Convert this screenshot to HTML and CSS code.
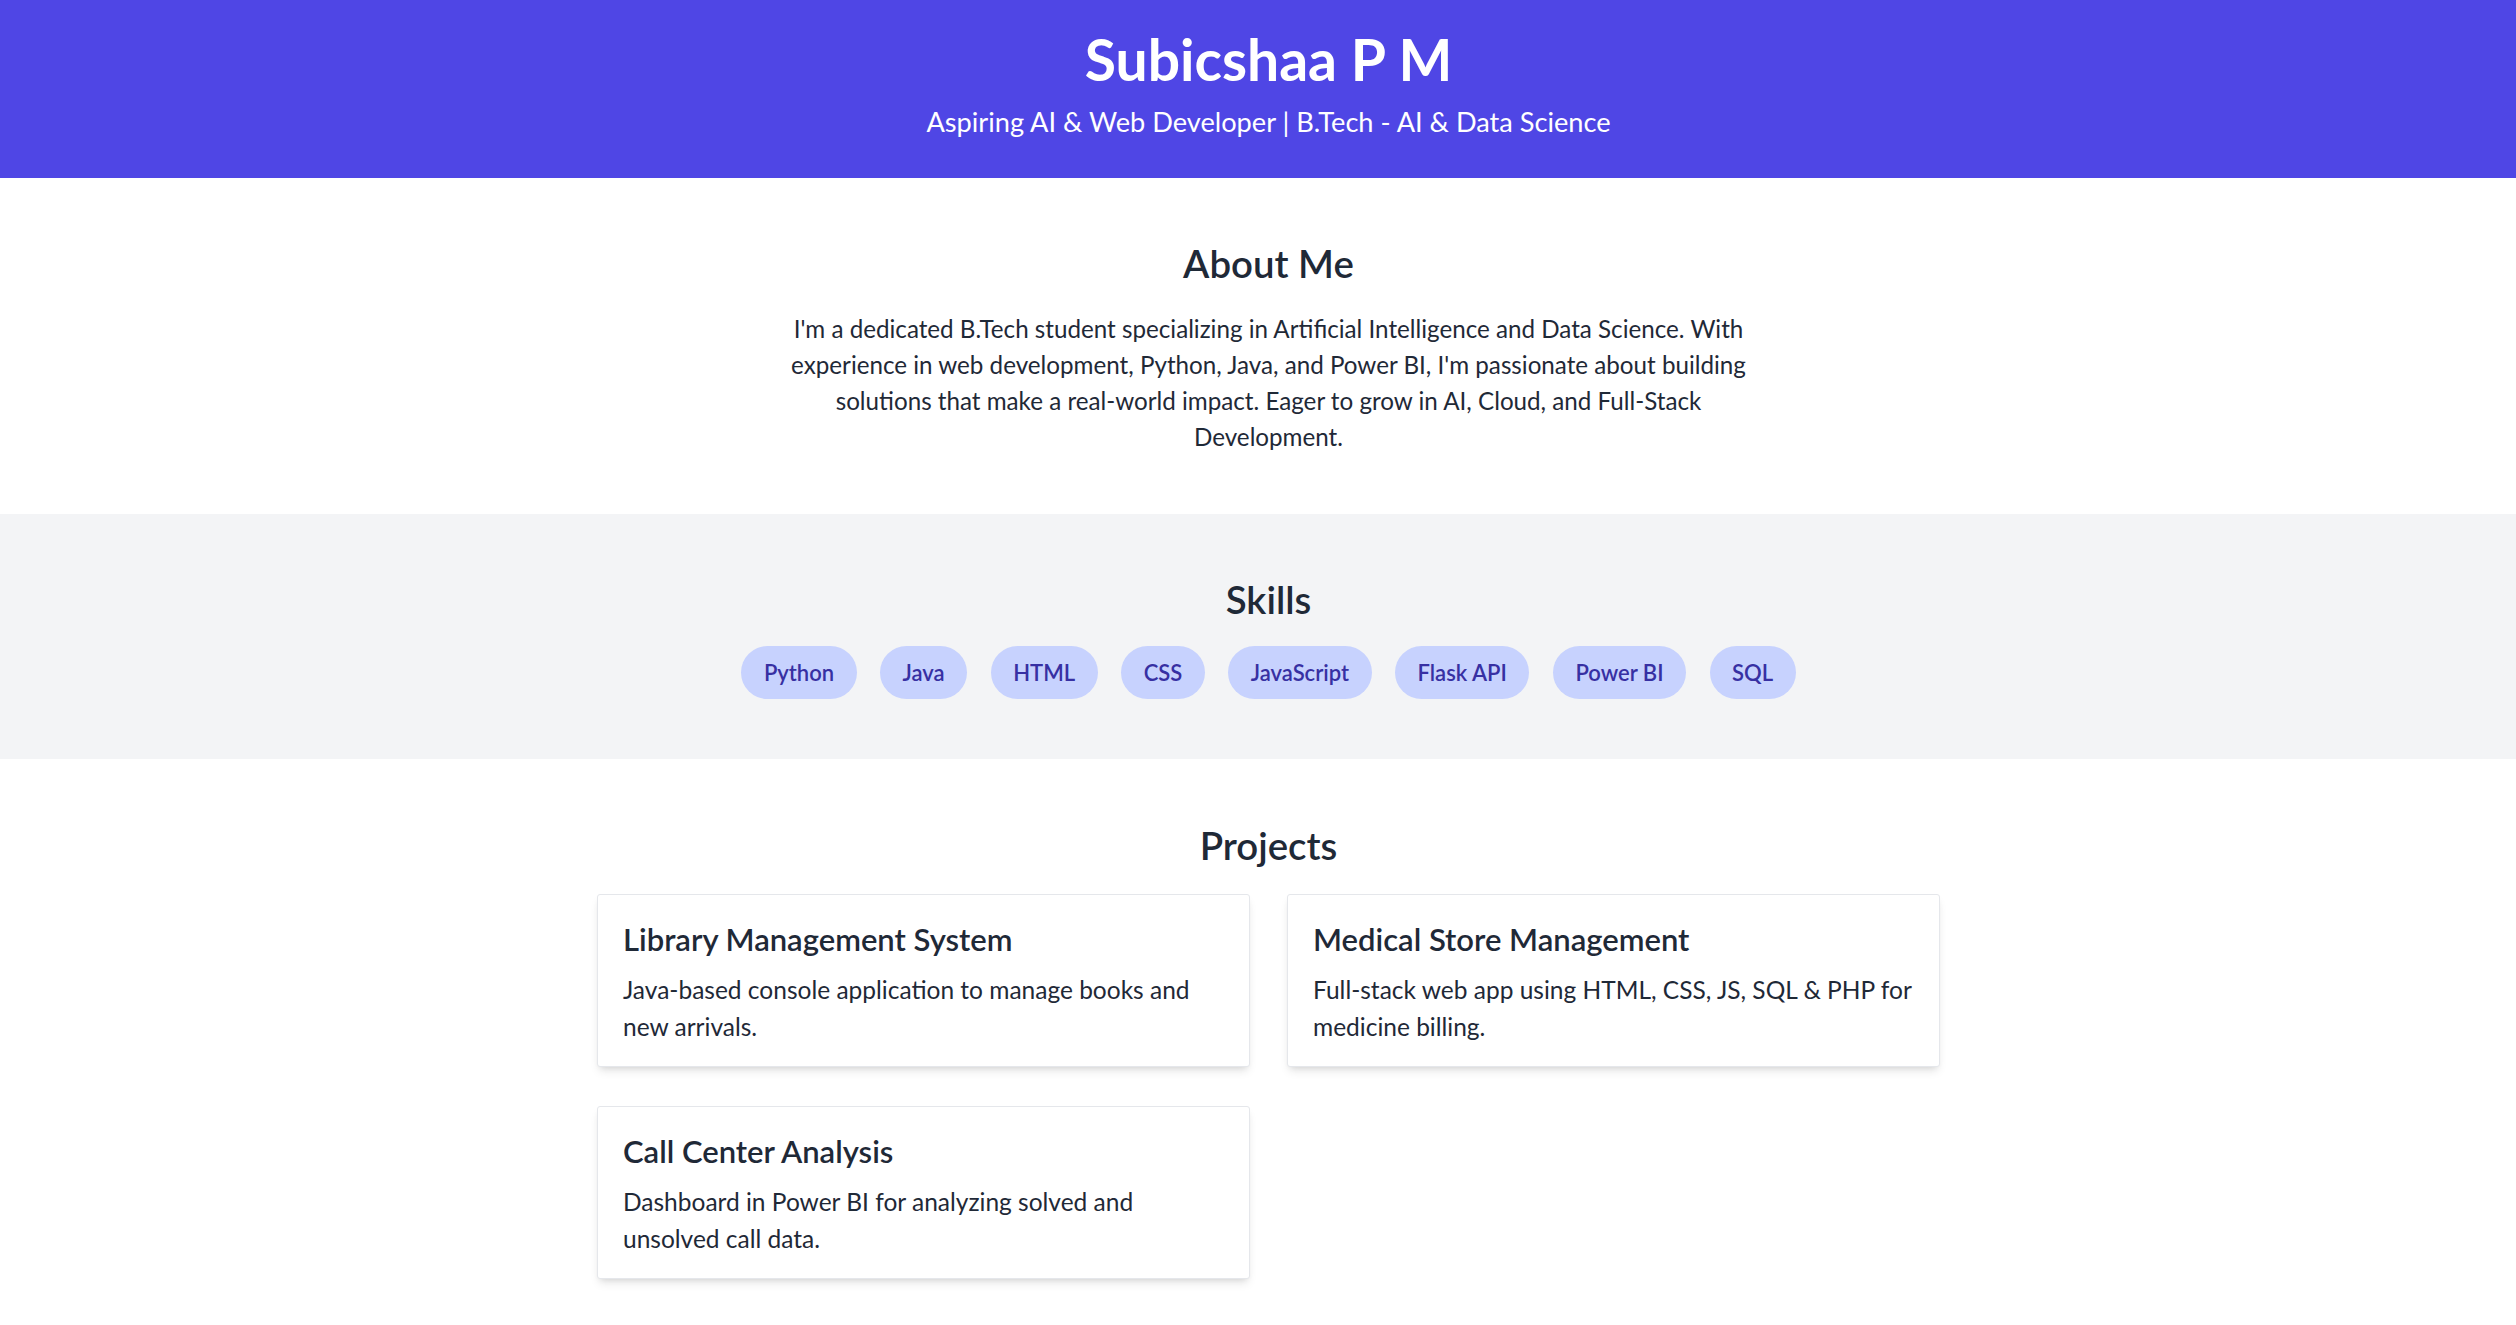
FILE: index.html
```html
<!DOCTYPE html>
<html lang="en">
<head>
<meta charset="utf-8">
<title>Subicshaa P M</title>
<link rel="stylesheet" href="styles.css">
</head>
<body>
  <header class="hero">
    <h1 class="hero-title">Subicshaa P M</h1>
    <p class="hero-sub">Aspiring AI &amp; Web Developer | B.Tech - AI &amp; Data Science</p>
  </header>

  <section class="section about">
    <h2 class="section-title">About Me</h2>
    <p class="about-text">I'm a dedicated B.Tech student specializing in Artificial Intelligence and Data Science. With experience in web development, Python, Java, and Power BI, I'm passionate about building solutions that make a real-world impact. Eager to grow in AI, Cloud, and Full-Stack Development.</p>
  </section>

  <section class="section skills">
    <h2 class="section-title skills-title">Skills</h2>
    <ul class="pill-list">
      <li class="pill">Python</li>
      <li class="pill">Java</li>
      <li class="pill">HTML</li>
      <li class="pill">CSS</li>
      <li class="pill">JavaScript</li>
      <li class="pill">Flask API</li>
      <li class="pill">Power BI</li>
      <li class="pill">SQL</li>
    </ul>
  </section>

  <section class="section projects">
    <h2 class="section-title">Projects</h2>
    <div class="card-grid">
      <article class="card">
        <h3 class="card-title">Library Management System</h3>
        <p class="card-text">Java-based console application to manage books and new arrivals.</p>
      </article>
      <article class="card">
        <h3 class="card-title">Medical Store Management</h3>
        <p class="card-text">Full-stack web app using HTML, CSS, JS, SQL &amp; PHP for medicine billing.</p>
      </article>
      <article class="card">
        <h3 class="card-title">Call Center Analysis</h3>
        <p class="card-text">Dashboard in Power BI for analyzing solved and unsolved call data.</p>
      </article>
    </div>
  </section>
</body>
</html>
```

FILE: styles.css
```css
* {
  box-sizing: border-box;
}

html, body {
  margin: 0;
  padding: 0;
}

body {
  font-family: Lato, "Noto Sans", "Liberation Sans", sans-serif;
  color: #1f2937;
  background: #ffffff;
}

.hero {
  background: #4f46e5;
  color: #ffffff;
  text-align: center;
  height: 178px;
  padding: 27px 0 0 21px;
}

.hero-title {
  margin: 0;
  font-size: 57px;
  line-height: 64px;
  font-weight: 700;
}

.hero-sub {
  margin: 10.5px 0 0;
  font-size: 27.2px;
  line-height: 40px;
  font-weight: 400;
}

.section {
  text-align: center;
  padding-left: 21px;
}

.about {
  height: 336px;
  padding-top: 59.5px;
}

.skills {
  background: #f3f4f6;
  height: 245px;
  padding-top: 59.5px;
}

.projects {
  padding-top: 60.5px;
  padding-bottom: 60px;
}

.section-title {
  margin: 0 0 22px;
  font-size: 38.4px;
  line-height: 51.2px;
  font-weight: 600;
  color: #1f2937;
}

.skills-title {
  margin-bottom: 21px;
}

.projects .section-title {
  margin-bottom: 23px;
}

.about-text {
  margin: 0 auto;
  max-width: 990px;
  font-size: 24.2px;
  line-height: 36px;
  color: #1f2937;
}

.pill-list {
  list-style: none;
  margin: 0;
  padding: 0;
  display: flex;
  justify-content: center;
  gap: 23.5px;
}

.pill {
  background: #c7d2fe;
  color: #3730a3;
  height: 53px;
  padding: 0 22.5px;
  border-radius: 27px;
  font-size: 22px;
  font-weight: 600;
  display: flex;
  align-items: center;
}

.card-grid {
  display: grid;
  grid-template-columns: 653px 653px;
  column-gap: 37px;
  row-gap: 39px;
  justify-content: center;
  text-align: left;
}

.card {
  background: #ffffff;
  border: 1px solid #e5e7eb;
  border-radius: 3px;
  box-shadow: 0 6px 10px -2px rgba(0, 0, 0, 0.1), 0 3px 6px -3px rgba(0, 0, 0, 0.1);
  padding: 25px 25px 21px;
  height: 173px;
}

.card-title {
  margin: 0 0 12.8px;
  font-size: 31px;
  line-height: 38.4px;
  font-weight: 600;
  color: #1f2937;
}

.card-text {
  margin: 0;
  font-size: 24.5px;
  line-height: 37px;
  color: #1f2937;
}
```
